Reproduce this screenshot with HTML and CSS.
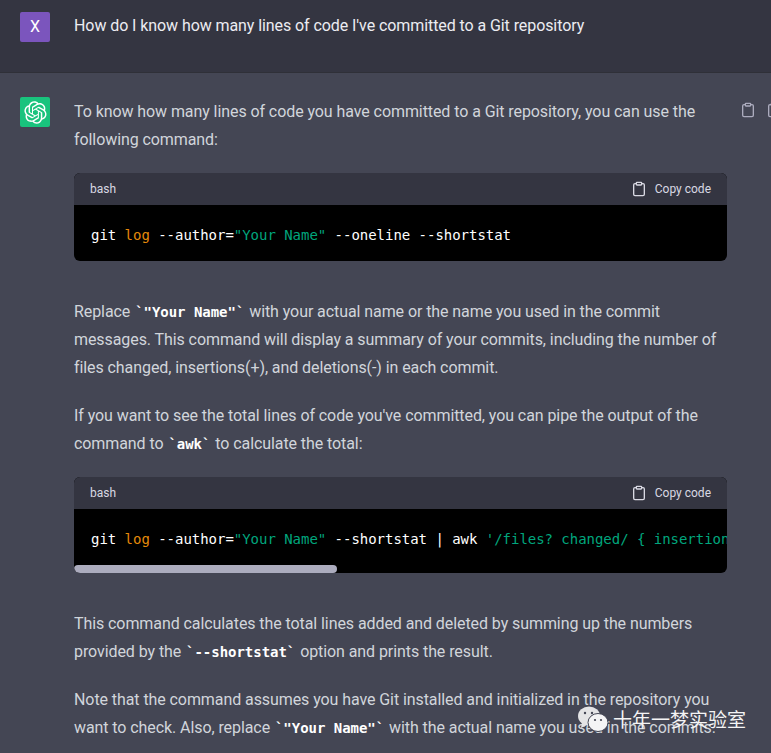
FILE: index.html
```html
<!DOCTYPE html>
<html lang="en">
<head>
    <meta charset="UTF-8">
    <meta name="viewport" content="width=device-width, initial-scale=1.0">
    <title>ChatGPT</title>
    <link rel="stylesheet" href="styles.css">
</head>
<body>

<svg class="icon-defs" width="0" height="0">
    <symbol id="clip" viewBox="0 0 24 24">
        <path d="M16 4h2a2 2 0 0 1 2 2v14a2 2 0 0 1-2 2H6a2 2 0 0 1-2-2V6a2 2 0 0 1 2-2h2"></path>
        <rect x="8" y="2" width="8" height="4" rx="1" ry="1"></rect>
    </symbol>
</svg>

<div class="row row-user">
    <div class="avatar avatar-user">X</div>
    <div class="question">How do I know how many lines of code I've committed to a Git repository</div>
</div>

<div class="row row-bot">
    <div class="avatar avatar-bot">
        <svg viewBox="0 0 41 41" width="23" height="23">
            <path fill="#fff" d="M37.5324 16.8707C37.9808 15.5241 38.1363 14.0974 37.9886 12.6859C37.8409 11.2744 37.3934 9.91076 36.676 8.68622C35.6126 6.83404 33.9882 5.3676 32.0373 4.4985C30.0864 3.62941 27.9098 3.40259 25.8215 3.85078C24.8796 2.7893 23.7219 1.94125 22.4257 1.36341C21.1295 0.785575 19.7249 0.491269 18.3058 0.500197C16.1708 0.495044 14.0893 1.16803 12.3614 2.42214C10.6335 3.67624 9.34853 5.44666 8.6917 7.47815C7.30085 7.76286 5.98686 8.3414 4.8377 9.17505C3.68854 10.0087 2.73073 11.0782 2.02839 12.312C0.956464 14.1591 0.498905 16.2988 0.721698 18.4228C0.944492 20.5467 1.83612 22.5449 3.268 24.1293C2.81966 25.4759 2.66413 26.9026 2.81182 28.3141C2.95951 29.7256 3.40701 31.0892 4.12437 32.3138C5.18791 34.1659 6.8123 35.6322 8.76321 36.5013C10.7141 37.3704 12.8907 37.5973 14.9789 37.1492C15.9208 38.2107 17.0786 39.0587 18.3747 39.6366C19.6709 40.2144 21.0755 40.5087 22.4946 40.4998C24.6307 40.5054 26.7133 39.8321 28.4418 38.5772C30.1704 37.3223 31.4556 35.5506 32.1119 33.5179C33.5027 33.2332 34.8167 32.6547 35.9659 31.821C37.115 30.9874 38.0728 29.9178 38.7752 28.684C39.8458 26.8371 40.3023 24.6979 40.0789 22.5748C39.8556 20.4517 38.9639 18.4544 37.5324 16.8707ZM22.4978 37.8849C20.7443 37.8874 19.0459 37.2733 17.6994 36.1501C17.7601 36.117 17.8666 36.0586 17.936 36.0161L25.9004 31.4156C26.1003 31.3019 26.2663 31.137 26.3813 30.9378C26.4964 30.7386 26.5563 30.5124 26.5549 30.2825V19.0542L29.9213 20.998C29.9389 21.0068 29.9541 21.0198 29.9656 21.0359C29.977 21.052 29.9842 21.0707 29.9867 21.0902V30.3889C29.9842 32.375 29.1946 34.2791 27.7909 35.6841C26.3872 37.0892 24.4838 37.8806 22.4978 37.8849ZM6.39227 31.0064C5.51397 29.4888 5.19742 27.7107 5.49804 25.9832C5.55718 26.0187 5.66048 26.0818 5.73461 26.1244L13.699 30.7248C13.8975 30.8408 14.1233 30.902 14.3532 30.902C14.583 30.902 14.8088 30.8408 15.0073 30.7248L24.731 25.1103V28.9979C24.7321 29.0177 24.7283 29.0376 24.7199 29.0556C24.7115 29.0736 24.6988 29.0893 24.6829 29.1012L16.6317 33.7497C14.9096 34.7416 12.8643 35.0097 10.9447 34.4954C9.02506 33.9811 7.38785 32.7263 6.39227 31.0064ZM4.29707 13.6194C5.17156 12.0998 6.55279 10.9364 8.19885 10.3327C8.19885 10.4013 8.19491 10.5228 8.19491 10.6071V19.808C8.19351 20.0378 8.25334 20.2638 8.36823 20.4629C8.48312 20.6619 8.64893 20.8267 8.84863 20.9404L18.5723 26.5542L15.206 28.4979C15.1894 28.5089 15.1703 28.5155 15.1505 28.5173C15.1307 28.5191 15.1107 28.516 15.0924 28.5082L7.04046 23.8557C5.32135 22.8601 4.06716 21.2235 3.55289 19.3046C3.03862 17.3858 3.30624 15.3413 4.29707 13.6194ZM31.955 20.0556L22.2312 14.4411L25.5976 12.4981C25.6142 12.4872 25.6333 12.4805 25.6531 12.4787C25.6729 12.4769 25.6928 12.4801 25.7111 12.4879L33.7631 17.1364C34.9967 17.849 36.0017 18.8982 36.6606 20.1613C37.3194 21.4244 37.6047 22.849 37.4832 24.2684C37.3617 25.6878 36.8382 27.0432 35.9743 28.1759C35.1103 29.3086 33.9415 30.1717 32.6047 30.6641C32.6047 30.5947 32.6047 30.4733 32.6047 30.3889V21.188C32.6066 20.9586 32.5474 20.7328 32.4332 20.5338C32.319 20.3348 32.154 20.1698 31.955 20.0556ZM35.3055 15.0128C35.2464 14.9765 35.1431 14.9142 35.069 14.8717L27.1045 10.2712C26.906 10.1554 26.6803 10.0943 26.4504 10.0943C26.2206 10.0943 25.9948 10.1554 25.7963 10.2712L16.0726 15.8858V11.9982C16.0715 11.9783 16.0753 11.9585 16.0837 11.9405C16.0921 11.9225 16.1048 11.9068 16.1207 11.8949L24.1719 7.25025C25.4053 6.53903 26.8158 6.19376 28.2383 6.25482C29.6608 6.31589 31.0364 6.78077 32.2044 7.59508C33.3723 8.40939 34.2842 9.53945 34.8334 10.8531C35.3826 12.1667 35.5464 13.6095 35.3055 15.0128ZM14.2424 21.9419L10.8752 19.9981C10.8576 19.9893 10.8423 19.9763 10.8309 19.9602C10.8195 19.9441 10.8122 19.9254 10.8098 19.9058V10.6071C10.8107 9.18295 11.2173 7.78848 11.9819 6.58696C12.7466 5.38544 13.8377 4.42659 15.1275 3.82264C16.4173 3.21869 17.8524 2.99464 19.2649 3.1767C20.6775 3.35876 22.0089 3.93941 23.1034 4.85067C23.0427 4.88379 22.937 4.94215 22.8668 4.98473L14.9024 9.58517C14.7025 9.69878 14.5366 9.86356 14.4215 10.0626C14.3065 10.2616 14.2466 10.4877 14.2479 10.7175L14.2424 21.9419ZM16.071 17.9991L20.4018 15.4978L24.7325 17.9975V22.9985L20.4018 25.4983L16.071 22.9985V17.9991Z"></path>
        </svg>
    </div>

    <div class="answer">
        <p>To know how many lines of code you have committed to a Git repository, you can use the following command:</p>

        <div class="code-block">
            <div class="code-head">
                <span>bash</span>
                <span class="copy"><svg class="clip-icon"><use href="#clip"></use></svg>Copy code</span>
            </div>
            <pre class="code-body"><code>git <span class="kw">log</span> --author=<span class="str">"Your Name"</span> --oneline --shortstat</code></pre>
        </div>

        <p class="after-code">Replace <code class="inline">`"Your Name"`</code> with your actual name or the name you used in the commit messages. This command will display a summary of your commits, including the number of files changed, insertions(+), and deletions(-) in each commit.</p>

        <p>If you want to see the total lines of code you've committed, you can pipe the output of the command to <code class="inline">`awk`</code> to calculate the total:</p>

        <div class="code-block">
            <div class="code-head">
                <span>bash</span>
                <span class="copy"><svg class="clip-icon"><use href="#clip"></use></svg>Copy code</span>
            </div>
            <pre class="code-body code-clip"><code>git <span class="kw">log</span> --author=<span class="str">"Your Name"</span> --shortstat | awk <span class="str">'/files? changed/ { insertions += $4; deletions += $6 }'</span></code></pre>
            <div class="scroll-thumb"></div>
        </div>

        <p class="after-code">This command calculates the total lines added and deleted by summing up the numbers provided by the <code class="inline">`--shortstat`</code> option and prints the result.</p>

        <p>Note that the command assumes you have Git installed and initialized in the repository you want to check. Also, replace <code class="inline">`"Your Name"`</code> with the actual name you used in the commits.</p>
    </div>

    <div class="side-icons">
        <svg class="clip-icon side-icon"><use href="#clip"></use></svg>
        <svg class="clip-icon side-icon"><use href="#clip"></use></svg>
    </div>
</div>

<div class="watermark">
    <svg viewBox="0 0 32 28" width="32" height="28">
        <ellipse cx="12" cy="11" rx="11" ry="9.5" fill="#e4e4e6"></ellipse>
        <path d="M5 17l-1 6 6-3z" fill="#e4e4e6"></path>
        <ellipse cx="21" cy="17.5" rx="10" ry="9" fill="#f4f4f5" stroke="#444654" stroke-width="1"></ellipse>
        <circle cx="8" cy="8" r="1.2" fill="#444654"></circle>
        <circle cx="15" cy="8" r="1.2" fill="#444654"></circle>
        <circle cx="18" cy="15" r="1.1" fill="#444654"></circle>
        <circle cx="24" cy="15" r="1.1" fill="#444654"></circle>
    </svg>
    <span>十年一梦实验室</span>
</div>

</body>
</html>
```

FILE: styles.css
```css
html, body {
    margin: 0;
    height: 100%;
    overflow: hidden;
}
body {
    position: relative;
    font-family: Roboto, "Liberation Sans", sans-serif;
    font-size: 16px;
    line-height: 28px;
    letter-spacing: -0.08px;
    color: #d1d5db;
    background-color: #444654;
}
.icon-defs {
    position: absolute;
}
.row {
    display: flex;
    gap: 24px;
    padding-left: 20px;
}
.row-user {
    height: 73px;
    box-sizing: border-box;
    padding-top: 12px;
    background-color: #343541;
    border-bottom: 1px solid #2f3038;
    color: #ececf1;
}
.row-bot {
    padding-top: 24px;
}
.avatar {
    width: 30px;
    height: 30px;
    flex: none;
    display: flex;
    align-items: center;
    justify-content: center;
    border-radius: 2px;
    color: white;
}
.avatar-user {
    background-color: #7b55bd;
    font-size: 16px;
}
.avatar-bot {
    background-color: #19c37d;
}
.answer {
    width: 653px;
    flex: none;
}
.answer p {
    margin: 0 0 19px;
    padding-top: 1px;
}
.answer p.after-code {
    margin-top: 36px;
}
.inline {
    margin: 0 1px;
    font-family: "DejaVu Sans Mono", monospace;
    font-size: 14px;
    font-weight: bold;
    letter-spacing: -0.03px;
    color: white;
}
.code-block {
    background-color: black;
    border-radius: 6px;
    overflow: hidden;
}
.code-head {
    display: flex;
    justify-content: space-between;
    align-items: center;
    height: 32px;
    padding: 0 16px;
    background-color: #343541;
    font-size: 12px;
    line-height: 16px;
    letter-spacing: 0;
    color: #d9d9e3;
}
.copy {
    display: flex;
    align-items: center;
    gap: 8px;
}
.clip-icon {
    width: 16px;
    height: 16px;
    fill: none;
    stroke: currentColor;
    stroke-width: 2;
    stroke-linecap: round;
    stroke-linejoin: round;
}
.code-body {
    margin: 0;
    padding: 18px 17px 14px;
    font-family: "DejaVu Sans Mono", monospace;
    font-size: 14px;
    line-height: 24px;
    letter-spacing: -0.03px;
    color: white;
}
.code-clip {
    overflow: hidden;
    padding-right: 0;
}
.scroll-thumb {
    width: 263px;
    height: 8px;
    background-color: #acacbe;
    border-radius: 8px;
}
.kw {
    color: #e58a0a;
}
.str {
    color: #00a67d;
}
.side-icons {
    display: flex;
    gap: 10px;
    flex: none;
    margin-left: -11px;
    margin-top: 5px;
    color: #acacbe;
}
.side-icon {
    flex: none;
}
.watermark {
    position: absolute;
    left: 577px;
    top: 705px;
    display: flex;
    align-items: center;
    gap: 4px;
    font-family: "Noto Sans CJK SC", sans-serif;
    font-size: 19px;
    line-height: 28px;
    letter-spacing: 0;
    color: #f4f4f5;
}
```
